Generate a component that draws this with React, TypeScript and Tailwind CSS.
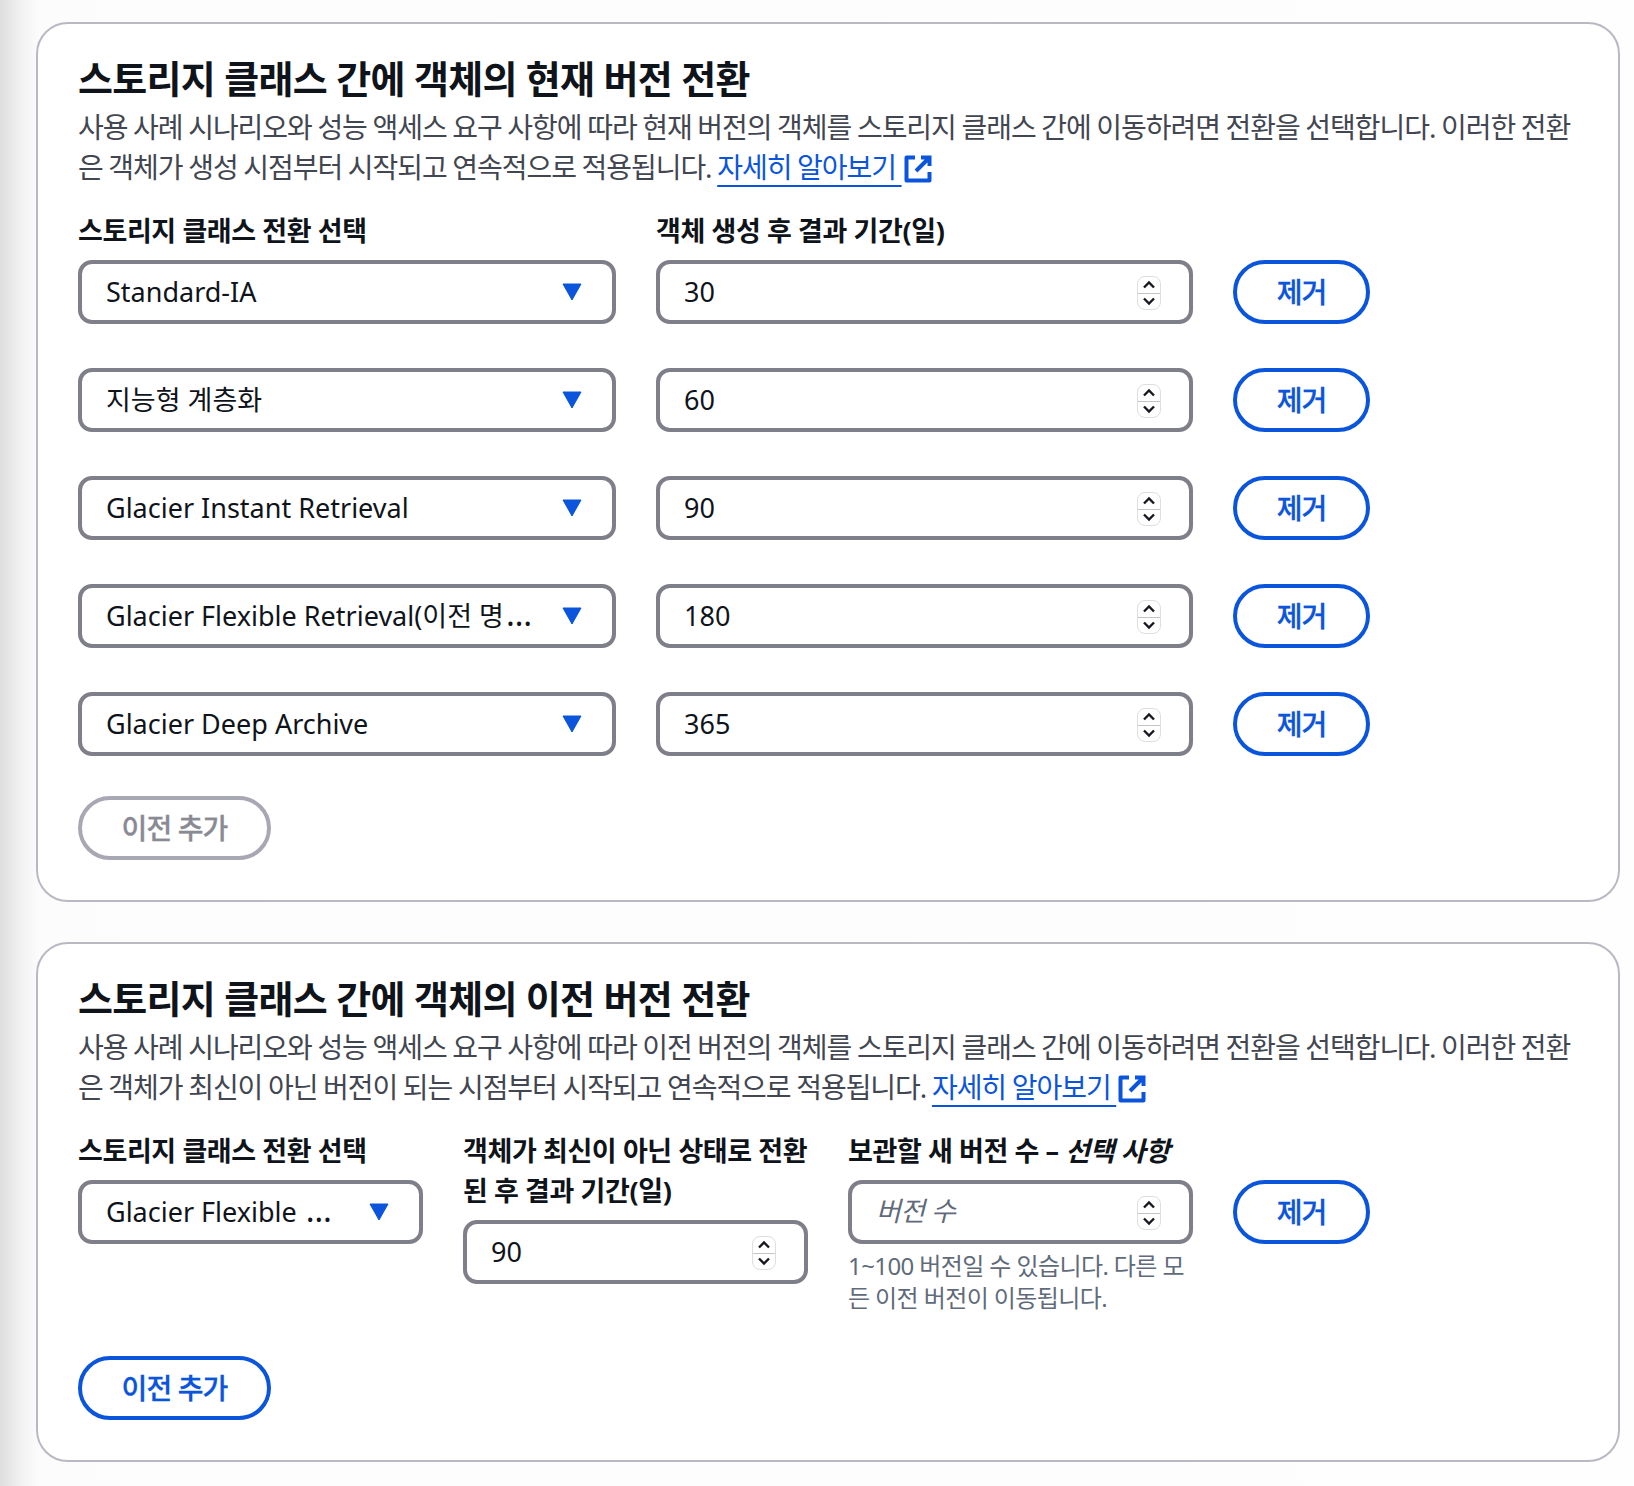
import React from 'react';

const Caret: React.FC = () => (
  <svg width="20" height="18" viewBox="0 0 20 18" className="shrink-0">
    <path d="M1 1 H19 L10 17 Z" fill="#0a55dc" stroke="#0a55dc" strokeWidth="1" strokeLinejoin="round" />
  </svg>
);

const Spinner: React.FC = () => (
  <div className="mt-[2px] flex h-[34px] w-[24px] shrink-0 flex-col rounded-[8px] border border-[#dedede] bg-white">
    <div className="flex flex-1 items-center justify-center border-b border-[#c4c4c4]">
      <svg width="14" height="9" viewBox="0 0 14 9"><path d="M2 7.5 L7 2.5 L12 7.5" fill="none" stroke="#16191f" strokeWidth="2.4" /></svg>
    </div>
    <div className="flex flex-1 items-center justify-center">
      <svg width="14" height="9" viewBox="0 0 14 9"><path d="M2 1.5 L7 6.5 L12 1.5" fill="none" stroke="#16191f" strokeWidth="2.4" /></svg>
    </div>
  </div>
);

const SelectBox: React.FC<{ value: string; cut?: boolean; className: string }> = ({ value, cut, className }) => (
  <div className={`flex h-[64px] items-center justify-between rounded-[14px] border-4 border-[#7f7f8a] bg-white pl-[24px] pr-[30px] ${className}`}>
    <span className="text-[27px] whitespace-nowrap text-[#0f141a]">
      {value}
      {cut && <span className="ml-[2px] text-[33px] leading-none">…</span>}
    </span>
    <Caret />
  </div>
);

const NumberBox: React.FC<{ value?: string; placeholder?: string; className: string }> = ({ value, placeholder, className }) => (
  <div className={`flex h-[64px] items-center justify-between rounded-[14px] border-4 border-[#7f7f8a] bg-white pl-[24px] pr-[28px] ${className}`}>
    {value ? (
      <span className="text-[27px] text-[#0f141a]">{value}</span>
    ) : (
      <span className="pb-[2px] text-[27px] italic tracking-[-0.6px] text-[#5f6b7a]">{placeholder}</span>
    )}
    <Spinner />
  </div>
);

const PillButton: React.FC<{ label: string; width: string; disabled?: boolean }> = ({ label, width, disabled }) => (
  <button
    className={`flex h-[64px] items-center justify-center rounded-full border-4 bg-white text-[28px] font-medium tracking-[-0.9px] [-webkit-text-stroke:0.3px] ${width} ${
      disabled ? 'border-[#a8a8b4] text-[#8a8a94]' : 'border-[#0a55dc] text-[#0a55dc]'
    }`}
  >
    {label}
  </button>
);

const ExternalLink: React.FC = () => (
  <a className="text-[#0a55dc]">
    <span className="underline decoration-2 underline-offset-[7px] [text-decoration-skip-ink:none]">자세히 알아보기&nbsp;</span>
    <svg width="28" height="28" viewBox="0 0 28 28" className="ml-[2px] inline-block align-[-5px]">
      <path d="M11 2.5 H2.5 V25.5 H25.5 V17" fill="none" stroke="#0a55dc" strokeWidth="4" strokeLinejoin="round" />
      <path d="M17 2.5 H25.5 V11 M25.5 2.5 L12 16" fill="none" stroke="#0a55dc" strokeWidth="4" />
    </svg>
  </a>
);

const rows = [
  { name: 'Standard-IA', days: '30' },
  { name: '지능형 계층화', days: '60' },
  { name: 'Glacier Instant Retrieval', days: '90' },
  { name: 'Glacier Flexible Retrieval(이전 명', days: '180', cut: true },
  { name: 'Glacier Deep Archive', days: '365' },
];

const Card: React.FC<{ title: string; desc: string; className: string; children: React.ReactNode }> = ({ title, desc, className, children }) => (
  <section className={`rounded-[32px] border-2 border-[#b9b9c4] bg-white px-[40px] ${className}`}>
    <h2 className="text-[38px] leading-[54px] font-bold tracking-[-0.7px] text-[#0f141a]">{title}</h2>
    <p className="mt-[2px] text-[28px] leading-[40px] tracking-[-1.04px] [word-spacing:-0.6px] text-[#424650]">
      {desc} <ExternalLink />
    </p>
    {children}
  </section>
);

const labelClass = 'text-[27px] leading-[40px] font-bold tracking-[-0.4px] text-[#0f141a]';

export default function App() {
  return (
    <div
      className="flex h-[1486px] w-[1634px] flex-col gap-[40px] bg-[linear-gradient(to_right,#dedede,#f4f4f4_24px,#fcfcfc_40px,#fefefe)] pl-[36px] pr-[14px] pt-[22px]"
      style={{ fontFamily: '"Noto Sans", "Noto Sans CJK KR", sans-serif' }}
    >
      <Card
        title="스토리지 클래스 간에 객체의 현재 버전 전환"
        desc="사용 사례 시나리오와 성능 액세스 요구 사항에 따라 현재 버전의 객체를 스토리지 클래스 간에 이동하려면 전환을 선택합니다. 이러한 전환은 객체가 생성 시점부터 시작되고 연속적으로 적용됩니다."
        className="h-[880px] pt-[27px]"
      >
        <div className="mt-[24px] flex flex-col">
          <div className={`flex gap-[40px] ${labelClass}`}>
            <div className="w-[538px]">스토리지 클래스 전환 선택</div>
            <div>객체 생성 후 결과 기간(일)</div>
          </div>
          <div className="mt-[9px] flex flex-col gap-[44px]">
            {rows.map(r => (
              <div key={r.days} className="flex gap-[40px]">
                <SelectBox value={r.name} cut={r.cut} className="w-[538px]" />
                <NumberBox value={r.days} className="w-[537px]" />
                <PillButton label="제거" width="w-[137px]" />
              </div>
            ))}
          </div>
          <div className="mt-[40px]">
            <PillButton label="이전 추가" width="w-[193px]" disabled />
          </div>
        </div>
      </Card>

      <Card
        title="스토리지 클래스 간에 객체의 이전 버전 전환"
        desc="사용 사례 시나리오와 성능 액세스 요구 사항에 따라 이전 버전의 객체를 스토리지 클래스 간에 이동하려면 전환을 선택합니다. 이러한 전환은 객체가 최신이 아닌 버전이 되는 시점부터 시작되고 연속적으로 적용됩니다."
        className="h-[520px] pt-[27px]"
      >
        <div className="mt-[24px] flex gap-[40px]">
          <div className="w-[345px]">
            <div className={`mb-[9px] ${labelClass}`}>스토리지 클래스 전환 선택</div>
            <SelectBox value="Glacier Flexible " cut className="w-[345px]" />
          </div>
          <div className="w-[345px]">
            <div className={`mb-[9px] ${labelClass}`}>객체가 최신이 아닌 상태로 전환된 후 결과 기간(일)</div>
            <NumberBox value="90" className="w-[345px]" />
          </div>
          <div className="w-[345px]">
            <div className={`mb-[9px] ${labelClass}`}>
              보관할 새 버전 수 – <span className="italic">선택 사항</span>
            </div>
            <NumberBox placeholder="버전 수" className="w-[345px]" />
            <p className="mt-[6px] text-[24px] leading-[32px] tracking-[-0.6px] text-[#5f6b7a]">1~100 버전일 수 있습니다. 다른 모든 이전 버전이 이동됩니다.</p>
          </div>
          <div className="pt-[49px]">
            <PillButton label="제거" width="w-[137px]" />
          </div>
        </div>
        <div className="mt-[42px]">
          <PillButton label="이전 추가" width="w-[193px]" />
        </div>
      </Card>
    </div>
  );
}
